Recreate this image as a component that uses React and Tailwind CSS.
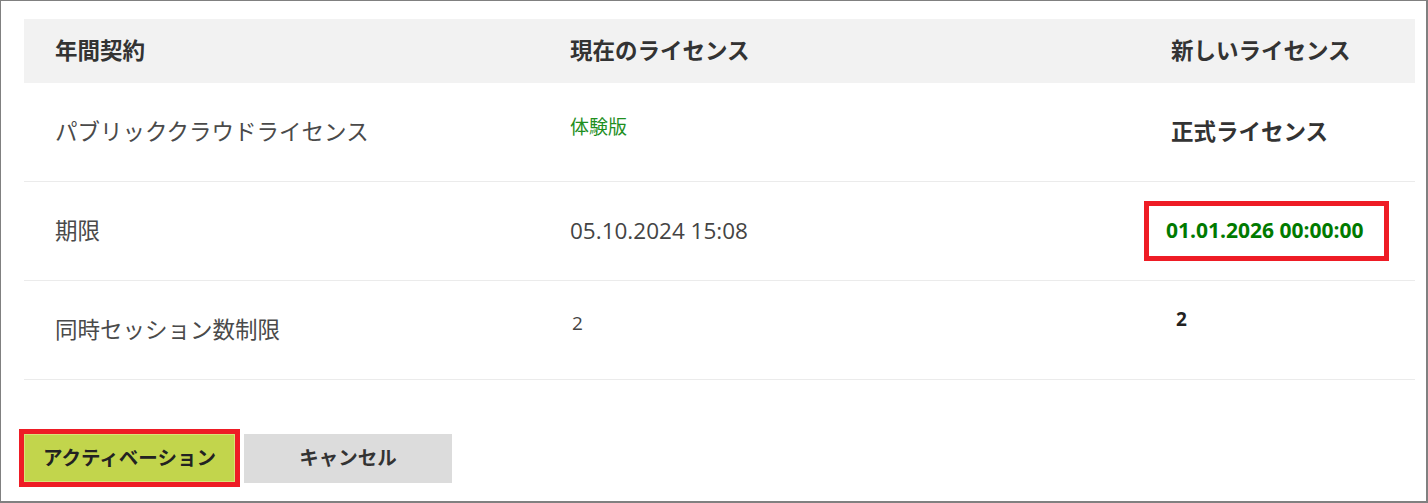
const FONT = "font-['Open_Sans','Noto_Sans_CJK_JP',sans-serif]";

const rows = [
  {
    label: "パブリッククラウドライセンス",
    current: <span className="mb-[10px] text-[19px] text-[#1f8f1f]">体験版</span>,
    next: <span className="text-[22.5px] font-bold text-[#333]">正式ライセンス</span>,
  },
  {
    label: "期限",
    current: <span className="text-[22.5px] text-[#444]">05.10.2024 15:08</span>,
    next: (
      <span className="-ml-[27px] flex h-[60px] items-center border-[5px] border-[#ee1c25] pl-[17px] pr-[20px] text-[21px] font-bold text-[#007a00]">
        01.01.2026 00:00:00
      </span>
    ),
  },
  {
    label: "同時セッション数制限",
    current: <span className="mb-[14px] pl-[2px] text-[19px] text-[#444]">2</span>,
    next: <span className="mb-[22px] pl-[5px] text-[19px] font-bold text-[#222]">2</span>,
  },
];

export default function App() {
  return (
    <div
      className={`${FONT} h-[503px] w-[1428px] border-l border-t border-r-2 border-b-2 border-[#808080] bg-white pl-[23px] pr-[11px] pt-[18px]`}
    >
      <div className="grid h-[64px] grid-cols-[515px_601px_1fr] items-center bg-[#f2f2f2] text-[22.5px] font-bold text-[#333]">
        <div className="pl-[31px]">年間契約</div>
        <div className="pl-[31px]">現在のライセンス</div>
        <div className="pl-[31px]">新しいライセンス</div>
      </div>

      {rows.map((r) => (
        <div
          key={r.label}
          className="grid h-[99px] grid-cols-[515px_601px_1fr] items-center border-b border-[#ebebeb]"
        >
          <div className="pl-[31px] text-[22.5px] text-[#4a4a4a]">{r.label}</div>
          <div className="flex items-center pl-[31px]">{r.current}</div>
          <div className="flex items-center pl-[31px]">{r.next}</div>
        </div>
      ))}

      <div className="-ml-[5px] mt-[49px] flex items-center">
        <div className="border-[5px] border-[#ee1c25]">
          <button className="flex h-[48px] w-[211px] items-center justify-center border border-[#d8e27a] bg-[#c2d54c] text-[19.5px] font-bold text-[#222]">
            アクティベーション
          </button>
        </div>
        <button className="ml-[4px] flex h-[49px] w-[208px] items-center justify-center bg-[#dcdcdc] text-[19.5px] font-bold text-[#333]">
          キャンセル
        </button>
      </div>
    </div>
  );
}
